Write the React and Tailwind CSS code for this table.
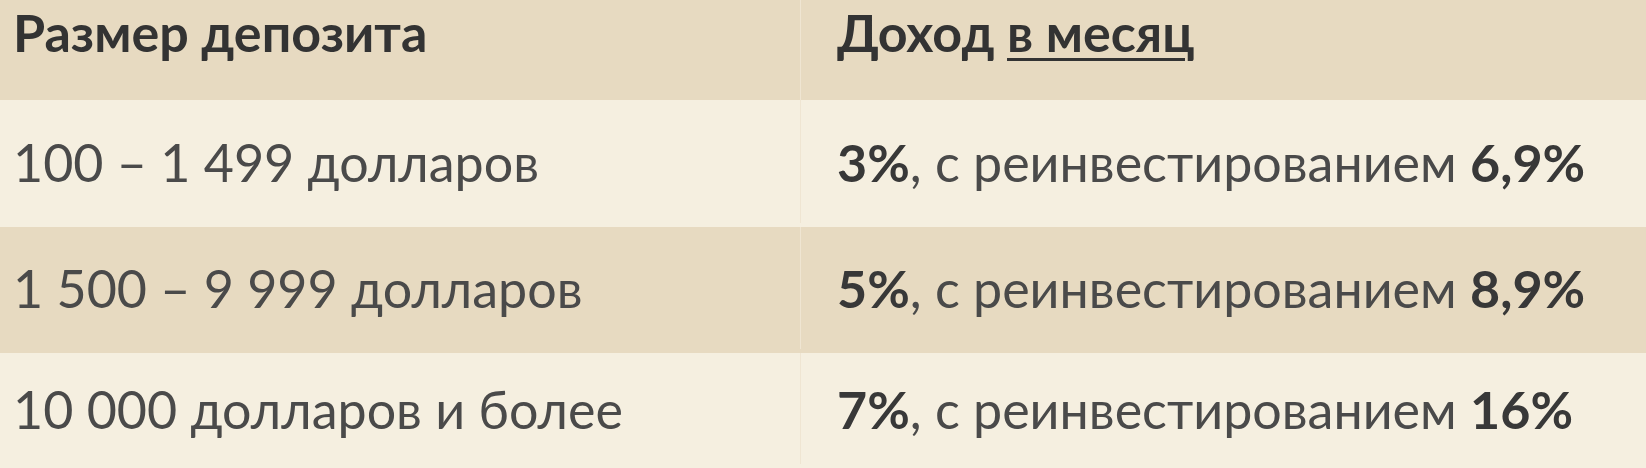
import React from 'react';

const rows = [
  { size: '100 – 1 499 долларов', base: '3%', reinvest: '6,9%', dark: false, h: 'h-[127px]' },
  { size: '1 500 – 9 999 долларов', base: '5%', reinvest: '8,9%', dark: true, h: 'h-[126px]' },
  { size: '10 000 долларов и более', base: '7%', reinvest: '16%', dark: false, h: 'h-[115px]' },
];

const App = () => {
  return (
    <main
      className="w-[1646px] h-[468px] overflow-hidden bg-[#f5efe0] text-[52px] leading-none text-[#4a4a4a]"
      style={{ fontFamily: 'Lato, "Noto Sans", sans-serif' }}
    >
      <div className="grid grid-cols-[800px_1fr] h-[100px] bg-[#e7dac1] text-[#333] font-bold">
        <div className="pl-[13px] pt-[6px]">Размер депозита</div>
        <div className="pl-[36px] pt-[6px] border-l border-[#efe5d2]">
          Доход <span className="underline decoration-[3px] underline-offset-[6px]">в месяц</span>
        </div>
      </div>
      {rows.map((row) => (
        <div
          key={row.size}
          className={
            'grid grid-cols-[800px_1fr] items-center pb-[4px] ' +
            row.h +
            ' ' +
            (row.dark ? 'bg-[#e7dac1]' : 'bg-[#f5efe0]')
          }
        >
          <div className="pl-[13px]">{row.size}</div>
          <div className="pl-[36px] h-full flex items-center border-l border-[#efe5d2]">
            <span>
              <b className="font-bold text-[#383838]">{row.base}</b>, с реинвестированием{' '}
              <b className="font-bold text-[#383838]">{row.reinvest}</b>
            </span>
          </div>
        </div>
      ))}
    </main>
  );
};

export default App;
